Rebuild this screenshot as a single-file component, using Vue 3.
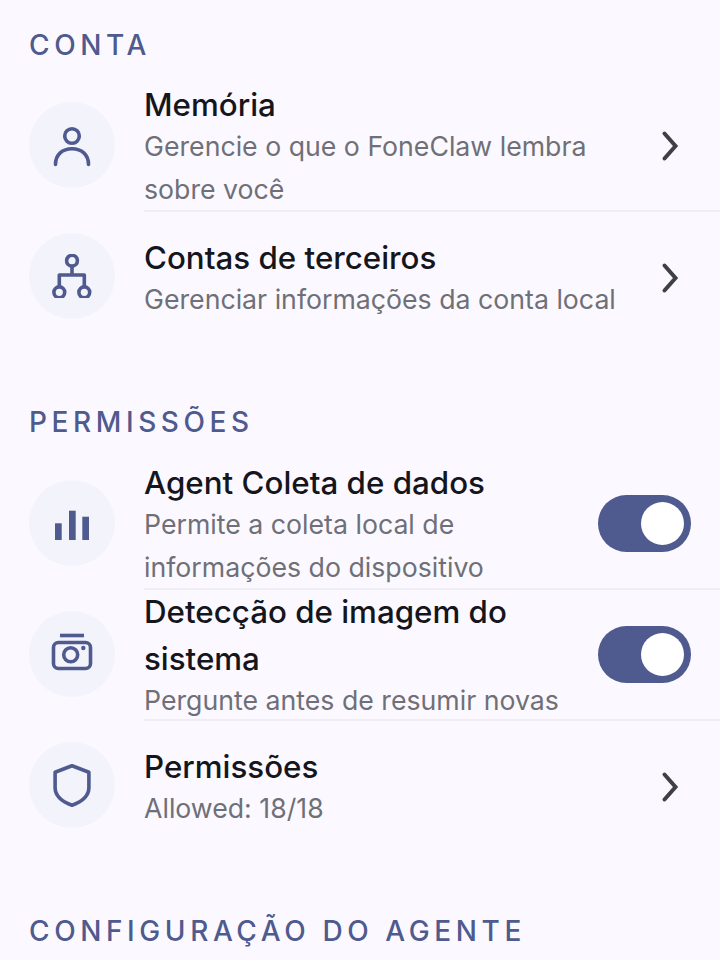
<template>
  <div class="page">
    <section v-for="group in groups" :key="group.title" class="group">
      <h2 class="group-title">{{ group.title }}</h2>
      <div v-for="item in group.items" :key="item.title" class="row">
        <div class="icon-wrap">
          <svg v-if="item.icon === 'person'" class="icon" viewBox="0 0 44 44">
            <circle cx="22" cy="13" r="7.3" />
            <path d="M5.5 41.5C5.5 31.5 12.5 25.8 22 25.8S38.5 31.5 38.5 41.5" />
          </svg>
          <svg v-else-if="item.icon === 'tree'" class="icon" viewBox="0 0 44 44">
            <circle cx="22" cy="6.7" r="5.4" />
            <circle cx="9.3" cy="38.3" r="5.4" />
            <circle cx="34.3" cy="38.3" r="5.4" />
            <path d="M22 12V21M9.3 33V21H34.3V33" stroke-linecap="butt" />
          </svg>
          <svg v-else-if="item.icon === 'bars'" class="icon filled" viewBox="0 0 44 44">
            <rect x="5" y="22.3" width="6.7" height="16.7" />
            <rect x="19" y="9.7" width="6.7" height="29.3" />
            <rect x="32.3" y="15.7" width="6.7" height="23.3" />
          </svg>
          <svg v-else-if="item.icon === 'camera'" class="icon" viewBox="0 0 44 44">
            <path d="M10 3.5H34" stroke-linecap="butt" />
            <rect x="3.5" y="10.5" width="37" height="26" rx="5" />
            <circle cx="20.7" cy="22.7" r="7" />
            <circle class="dot" cx="33.3" cy="16" r="2.2" />
          </svg>
          <svg v-else class="icon" viewBox="0 0 44 44">
            <path d="M22 2.8L38.9 9.3V24.5C38.9 33 31 39 22 42.3C13 39 5.1 33 5.1 24.5V9.3Z" />
          </svg>
        </div>
        <div class="body">
          <div class="text">
            <div class="title">{{ item.title }}</div>
            <div class="sub">{{ item.sub }}</div>
          </div>
          <div v-if="item.toggle" class="toggle"><span class="knob"></span></div>
          <svg v-else class="chevron" viewBox="0 0 20 32">
            <path d="M4.5 3.5L15.5 16L4.5 28.5" />
          </svg>
        </div>
      </div>
    </section>
  </div>
</template>

<script setup>
const groups = [
  {
    title: 'CONTA',
    items: [
      { icon: 'person', title: 'Memória', sub: 'Gerencie o que o FoneClaw lembra sobre você' },
      { icon: 'tree', title: 'Contas de terceiros', sub: 'Gerenciar informações da conta local' }
    ]
  },
  {
    title: 'PERMISSÕES',
    items: [
      { icon: 'bars', title: 'Agent Coleta de dados', sub: 'Permite a coleta local de informações do dispositivo', toggle: true },
      { icon: 'camera', title: 'Detecção de imagem do sistema', sub: 'Pergunte antes de resumir novas', toggle: true },
      { icon: 'shield', title: 'Permissões', sub: 'Allowed: 18/18' }
    ]
  },
  {
    title: 'CONFIGURAÇÃO DO AGENTE',
    items: []
  }
]
</script>

<style>
html, body { background: #fbf9ff; overflow: hidden; height: 960px; }
</style>

<style scoped>
.page { font-family: Inter, sans-serif; padding-top: 27px; }
.group { margin-bottom: 61px; }
.group:last-child { margin-bottom: 0; }
.group-title { margin: 0 0 18px; padding-left: 29px; font-size: 28px; line-height: 36px; font-weight: 500; letter-spacing: 4.6px; color: #4f5a8e; }
.group + .group .group-title { margin-bottom: 19px; }
.row { display: flex; height: 131px; padding-left: 29px; }
.icon-wrap { flex: none; align-self: center; width: 86px; height: 86px; border-radius: 50%; background: #f3f3fc; display: flex; align-items: center; justify-content: center; margin: 0 29px 3px 0; }
.icon { width: 44px; height: 44px; fill: none; stroke: #4f5a8e; stroke-width: 3.6; stroke-linecap: round; stroke-linejoin: round; }
.icon.filled { fill: #4f5a8e; stroke: none; }
.dot { fill: #4f5a8e; stroke: none; }
.body { flex: 1; min-width: 0; display: flex; align-items: center; padding-right: 29px; border-bottom: 2px solid #eeedf3; }
.row:last-child .body { border-bottom: none; }
.text { flex: 1; min-width: 0; padding-right: 16px; }
.title { margin-top: 1px; font-size: 31.3px; line-height: 47px; font-weight: 500; color: #15151c; }
.sub { margin-top: -4px; font-size: 26.7px; line-height: 43px; color: #6f7077; }
.toggle { flex: none; width: 93px; height: 57px; border-radius: 29px; background: #4f5a8e; display: flex; align-items: center; justify-content: flex-end; padding-right: 7px; box-sizing: border-box; }
.knob { width: 43px; height: 43px; border-radius: 50%; background: #fff; }
.chevron { flex: none; width: 20px; height: 32px; margin-right: 11px; fill: none; stroke: #3f3f47; stroke-width: 4; stroke-linecap: round; stroke-linejoin: miter; }
</style>
